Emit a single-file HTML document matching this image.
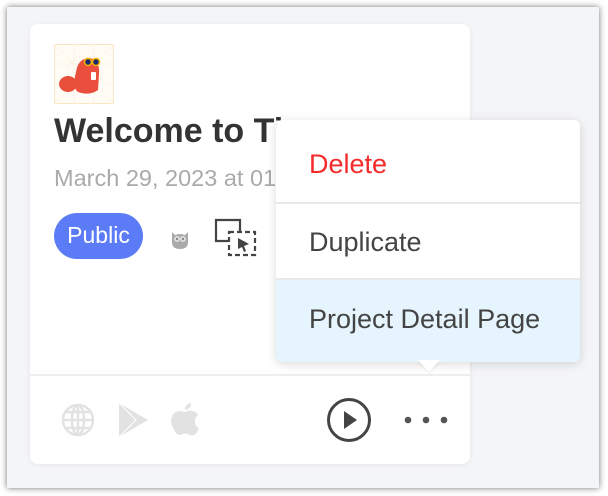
<!DOCTYPE html>
<html><head><style>
*{margin:0;padding:0;box-sizing:border-box}
body{width:608px;height:496px;background:#fff;position:relative;overflow:hidden;font-family:"Liberation Sans",Arial,sans-serif}
.frame{position:absolute;left:7px;top:7px;width:592px;height:481px;background:#f4f5f7;box-shadow:0 0 6px rgba(0,0,0,.55)}
.card{position:absolute;left:30px;top:24px;width:440px;height:440px;background:#fff;border-radius:8px;box-shadow:0 1px 6px rgba(0,0,0,.06)}
.title{position:absolute;left:54px;top:112px;font-size:34px;font-weight:bold;color:#333;white-space:nowrap}
.date{position:absolute;left:54px;top:165px;font-size:23.5px;color:#aaa;white-space:nowrap}
.pill{position:absolute;left:54px;top:213px;width:89px;height:46px;border-radius:23px;background:#5b7cf6;color:#fff;font-size:23px;line-height:44px;text-align:center}
.hr{position:absolute;left:30px;top:374px;width:440px;height:2px;background:#eee}
.menu{position:absolute;left:276px;top:120px;width:304px;height:242px;background:#fff;border-radius:6px;box-shadow:0 2px 10px rgba(0,0,0,.15);overflow:visible}
.item{position:absolute;left:0;width:304px;padding-left:33px;font-size:27px;color:#444;white-space:nowrap}
.arrow{position:absolute;left:418px;top:360px;width:0;height:0;border-left:11px solid transparent;border-right:11px solid transparent;border-top:12px solid #fff}
</style></head><body>
<div class="frame"></div>
<div class="card"></div>
<svg style="position:absolute;left:54px;top:44px" width="60" height="60" viewBox="0 0 60 60">
<rect x="0.5" y="0.5" width="59" height="59" fill="#fffcf5" stroke="#fbe6c4"/>
<path d="M0 0L60 60M60 0L0 60M20 0V60M40 0V60M0 20H60M0 40H60" stroke="#fcefd8" stroke-width="0.6"/>
<circle cx="30" cy="30" r="17" fill="none" stroke="#fcefd8" stroke-width="0.6"/>
<ellipse cx="14" cy="40" rx="9" ry="8" fill="#e8503c"/>
<path d="M22 28Q24 14 36 14Q46 16 45 30L44 46Q36 52 24 48Q18 44 22 28Z" fill="#ea4f3d"/>
<circle cx="34" cy="18" r="3.5" fill="#1a2a6c" stroke="#f6b400" stroke-width="1.5"/>
<circle cx="42" cy="18" r="3.5" fill="#1a2a6c" stroke="#f6b400" stroke-width="1.5"/>
<rect x="37" y="28" width="5" height="8" fill="#fff" rx="1"/>
</svg>
<div class="title">Welcome to Ti</div>
<div class="date">March 29, 2023 at 01</div>
<div class="pill">Public</div>
<svg style="position:absolute;left:169px;top:228px" width="22" height="22" viewBox="0 0 22 22">
<path d="M3 4L6 7Q11 5 16 7L19 4V14Q19 21 11 21Q3 21 3 14Z" fill="#aaa"/>
<circle cx="8" cy="11" r="3" fill="#ddd"/><circle cx="14" cy="11" r="3" fill="#ddd"/>
<circle cx="8" cy="11" r="1.2" fill="#888"/><circle cx="14" cy="11" r="1.2" fill="#888"/>
</svg>
<svg style="position:absolute;left:214px;top:218px" width="44" height="40" viewBox="0 0 44 40">
<path d="M14 23H2V2H26V13" fill="none" stroke="#444" stroke-width="2.2"/>
<rect x="15" y="14" width="26" height="23" fill="none" stroke="#444" stroke-width="2.2" stroke-dasharray="5 3"/>
<path d="M24 20L35 26L30 28L32 33L30 34L28 29L24 31Z" fill="#444"/>
</svg>
<div class="hr"></div>
<svg style="position:absolute;left:60px;top:402px" width="36" height="36" viewBox="0 0 36 36" fill="none" stroke="#e2e2e2" stroke-width="2.5">
<circle cx="18" cy="18" r="15"/><ellipse cx="18" cy="18" rx="6" ry="15"/><path d="M3 18H33M18 3V33M6 10H30M6 26H30"/>
</svg>
<svg style="position:absolute;left:118px;top:402px" width="32" height="36" viewBox="0 0 32 36"><path d="M1 1L30 18L1 35Z" fill="#e2e2e2"/><path d="M1 1L18 18L1 35" stroke="#fff" stroke-width="1" fill="none"/></svg>
<svg style="position:absolute;left:169px;top:401px" width="32" height="36" viewBox="0 0 32 36"><path d="M22 2Q22 8 16 9Q16 3 22 2ZM16 11Q20 9 24 10Q28 11 29 14Q25 17 26 22Q27 26 30 27Q28 33 25 34Q22 35 19 33Q16 32 13 33Q10 35 8 33Q2 26 2 19Q3 12 9 10Q12 10 16 11Z" fill="#e2e2e2"/></svg>
<svg style="position:absolute;left:326px;top:397px" width="46" height="46" viewBox="0 0 46 46"><circle cx="23" cy="23" r="20.5" fill="none" stroke="#444" stroke-width="3"/><path d="M18 14L31 23L18 32Z" fill="#444"/></svg>
<svg style="position:absolute;left:400px;top:412px" width="52" height="16"><circle cx="8" cy="8" r="3.3" fill="#555"/><circle cx="26" cy="8" r="3.3" fill="#555"/><circle cx="44" cy="8" r="3.3" fill="#555"/></svg>
<div class="menu">
<div class="item" style="top:0;height:82px;line-height:88px;color:#f52a2a;border-radius:6px 6px 0 0">Delete</div>
<div style="position:absolute;left:0;top:82px;width:304px;height:2px;background:#e8e8e8"></div>
<div class="item" style="top:84px;height:74px;line-height:76px">Duplicate</div>
<div style="position:absolute;left:0;top:158px;width:304px;height:2px;background:#e8e8e8"></div>
<div class="item" style="top:160px;height:82px;line-height:78px;background:#e5f4fd;border-radius:0 0 6px 6px">Project Detail Page</div>
</div>
<div class="arrow" style="border-top-color:#fff;filter:drop-shadow(0 2px 1px rgba(0,0,0,.06))"></div>
</body></html>
